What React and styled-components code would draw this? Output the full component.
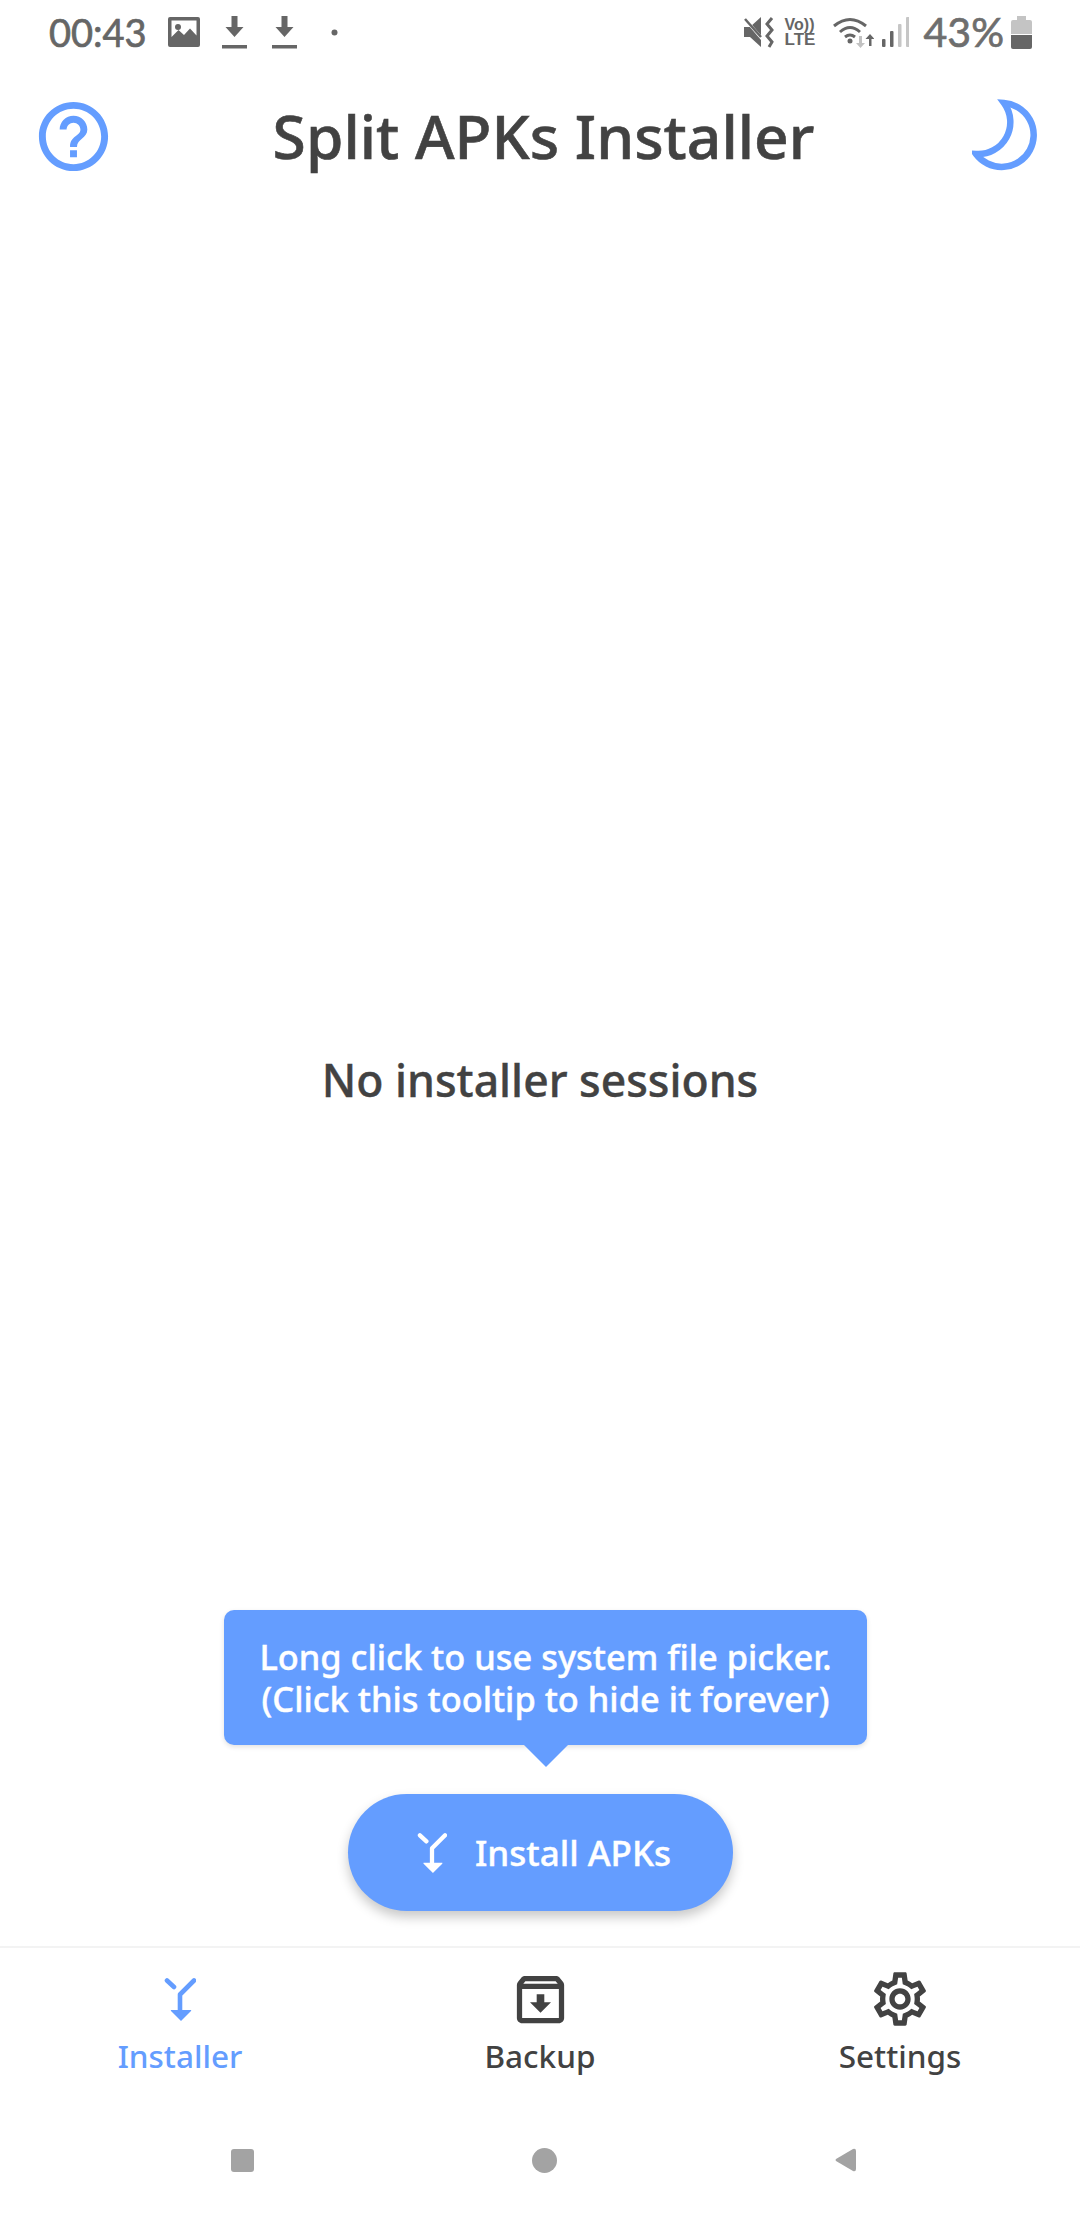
import React from "react";
import styled, { createGlobalStyle } from "styled-components";

const BLUE = "#649dff";
const INK = "#424242";
const STATUS = "#666666";
const FONT = `"Noto Sans", "Open Sans", sans-serif`;

const Global = createGlobalStyle`
  html, body { margin: 0; padding: 0; background: #fff; }
  body { font-family: ${FONT}; }
`;

const Page = styled.div`
  width: 1080px;
  height: 2220px;
  display: flex;
  flex-direction: column;
  background: #fff;
  overflow: hidden;
  position: relative;
`;

const StatusBar = styled.div`
  height: 64px;
  flex: none;
  display: flex;
  align-items: center;
  justify-content: space-between;
  padding: 0 48px 0 49px;
  color: ${STATUS};
`;
const StatusGroup = styled.div`
  display: flex;
  align-items: center;
`;
const StatusText = styled.span`
  font-family: "Lato", sans-serif;
  font-size: 38px;
  line-height: 44px;
  font-weight: 400;
  -webkit-text-stroke: 0.7px currentColor;
  color: ${STATUS};
`;
const StatusIcon = styled.svg`
  flex: none;
  display: block;
  margin-left: ${(p) => p.$gap || 0}px;
  fill: currentColor;
`;
const VolteBadge = styled.div`
  margin-left: 11px;
  width: 31px;
  display: flex;
  flex-direction: column;
  align-items: flex-start;
  font-family: "Liberation Sans", sans-serif;
  font-weight: 700;
  color: ${STATUS};
  line-height: 15px;
`;
const VoLine = styled.span`
  font-size: 16px;
`;
const LteLine = styled.span`
  font-size: 17px;
`;
const Percent = styled(StatusText)`
  margin-left: 15px;
  font-size: 41px;
  color: #6e6e6e;
`;

const Toolbar = styled.header`
  height: 144px;
  flex: none;
  display: flex;
  align-items: center;
  justify-content: space-between;
  padding: 0 40px 6px 32px;
`;
const Title = styled.h1`
  margin: 0;
  font-size: 60.5px;
  line-height: 80px;
  font-weight: 500;
  -webkit-text-stroke: 0.6px currentColor;
  color: ${INK};
`;
const ToolbarIcon = styled.svg`
  flex: none;
  display: block;
`;

const Content = styled.main`
  flex: 1;
  min-height: 0;
  display: flex;
  align-items: center;
  justify-content: center;
  position: relative;
`;
const EmptyText = styled.div`
  font-size: 44.5px;
  line-height: 58px;
  font-weight: 500;
  -webkit-text-stroke: 0.4px currentColor;
  color: ${INK};
`;

const FabStack = styled.div`
  position: absolute;
  left: 0;
  right: 0;
  bottom: 35px;
  display: flex;
  flex-direction: column;
  align-items: center;
`;
const Tooltip = styled.div`
  width: 643px;
  height: 135px;
  margin-left: 11px;
  box-sizing: border-box;
  border-radius: 10px;
  background: ${BLUE};
  color: #fff;
  font-size: 34.4px;
  line-height: 42px;
  font-weight: 500;
  -webkit-text-stroke: 0.4px currentColor;
  text-align: center;
  display: flex;
  flex-direction: column;
  justify-content: center;
  position: relative;
  box-shadow: 0 2px 5px rgba(0, 0, 0, 0.12);
  &::after {
    content: "";
    position: absolute;
    left: 50%;
    top: 100%;
    margin-left: -22px;
    border-left: 22px solid transparent;
    border-right: 22px solid transparent;
    border-top: 22px solid ${BLUE};
  }
`;
const Fab = styled.button`
  margin-top: 49px;
  width: 385px;
  height: 117px;
  border: 0;
  border-radius: 59px;
  background: ${BLUE};
  color: #fff;
  display: flex;
  align-items: center;
  justify-content: center;
  gap: 28px;
  padding: 0 0 0 8px;
  font-family: ${FONT};
  font-size: 35px;
  font-weight: 500;
  -webkit-text-stroke: 0.4px currentColor;
  box-shadow: 0 6px 12px rgba(0, 0, 0, 0.22);
`;

const BottomNav = styled.nav`
  flex: none;
  height: 154px;
  box-sizing: border-box;
  border-top: 2px solid #f3f3f3;
  display: grid;
  grid-template-columns: repeat(3, 1fr);
  width: 1080px;
`;
const Tab = styled.div`
  display: flex;
  flex-direction: column;
  align-items: center;
  padding-top: 23px;
  color: ${(p) => (p.$active ? BLUE : INK)};
`;
const TabIconBox = styled.div`
  height: 56px;
  display: flex;
  align-items: center;
  justify-content: center;
`;
const TabLabel = styled.span`
  margin-top: 8px;
  font-size: 31.5px;
  line-height: 42px;
  font-weight: 500;
`;

const SystemNav = styled.div`
  flex: none;
  height: 120px;
  box-sizing: border-box;
  display: flex;
  align-items: center;
  justify-content: space-between;
  padding: 0 223px 0 231px;
`;
const RecentKey = styled.div`
  width: 23px;
  height: 23px;
  border-radius: 3px;
  background: #a3a3a3;
`;
const HomeKey = styled.div`
  width: 25px;
  height: 25px;
  border-radius: 50%;
  background: #a3a3a3;
`;

const SplitIcon = ({ color, width = 32, height = 43 }) => (
  <svg width={width} height={height} viewBox="0 0 32 43" fill="none">
    <path d="M3 2.5 L10 9" stroke={color} strokeWidth="4.6" strokeLinecap="round" />
    <path d="M30 2.5 L16 16.5 V33" stroke={color} strokeWidth="4.6" strokeLinecap="round" strokeLinejoin="round" />
    <path d="M7 32 H27 Q27.5 32 27 33 L17 43 L7 33 Q6.5 32 7 32 Z" fill={color} />
  </svg>
);

const ArchiveIcon = () => (
  <svg width="63" height="63" viewBox="0 0 24 24" fill="currentColor">
    <path d="M20.54 5.23l-1.39-1.68C18.88 3.21 18.47 3 18 3H6c-.47 0-.88.21-1.16.55L3.46 5.23C3.17 5.57 3 6.02 3 6.5V19c0 1.1.9 2 2 2h14c1.1 0 2-.9 2-2V6.5c0-.48-.17-.93-.46-1.27zM6.24 5h11.52l.81.97H5.44l.8-.97zM5 19V8h14v11H5zm8.45-9h-2.9v3H8l4 4 4-4h-2.55z" />
  </svg>
);

const GearIcon = () => (
  <svg width="64" height="64" viewBox="0 0 24 24" fill="currentColor">
    <path d="M19.43 12.98c.04-.32.07-.64.07-.98 0-.34-.03-.66-.07-.98l2.11-1.65c.19-.15.24-.42.12-.64l-2-3.46c-.09-.16-.26-.25-.44-.25-.06 0-.12.01-.17.03l-2.49 1c-.52-.4-1.08-.73-1.69-.98l-.38-2.65C14.46 2.18 14.25 2 14 2h-4c-.25 0-.46.18-.49.42l-.38 2.65c-.61.25-1.17.59-1.69.98l-2.49-1c-.06-.02-.12-.03-.18-.03-.17 0-.34.09-.43.25l-2 3.46c-.13.22-.07.49.12.64l2.11 1.65c-.04.32-.07.65-.07.98 0 .33.03.66.07.98l-2.11 1.65c-.19.15-.24.42-.12.64l2 3.46c.09.16.26.25.44.25.06 0 .12-.01.17-.03l2.49-1c.52.4 1.08.73 1.69.98l.38 2.65c.03.24.24.42.49.42h4c.25 0 .46-.18.49-.42l.38-2.65c.61-.25 1.17-.59 1.69-.98l2.49 1c.06.02.12.03.18.03.17 0 .34-.09.43-.25l2-3.46c.12-.22.07-.49-.12-.64l-2.11-1.65zm-1.98-1.71c.04.31.05.52.05.73 0 .21-.02.43-.05.73l-.14 1.13.89.7 1.08.84-.7 1.21-1.27-.51-1.04-.42-.9.68c-.43.32-.84.56-1.25.73l-1.06.43-.16 1.13-.2 1.35h-1.4l-.19-1.35-.16-1.13-1.06-.43c-.43-.18-.83-.41-1.23-.71l-.91-.7-1.06.43-1.27.51-.7-1.21 1.08-.84.89-.7-.14-1.13c-.03-.31-.05-.54-.05-.74s.02-.43.05-.73l.14-1.13-.89-.7-1.08-.84.7-1.21 1.27.51 1.04.42.9-.68c.43-.32.84-.56 1.25-.73l1.06-.43.16-1.13.2-1.35h1.39l.19 1.35.16 1.13 1.06.43c.43.18.83.41 1.23.71l.91.7 1.06-.43 1.27-.51.7 1.21-1.07.85-.89.7.14 1.13zM12 8c-2.21 0-4 1.79-4 4s1.79 4 4 4 4-1.79 4-4-1.79-4-4-4zm0 6c-1.1 0-2-.9-2-2s.9-2 2-2 2 .9 2 2-.9 2-2 2z" />
  </svg>
);

const DownloadGlyph = ({ gap }) => (
  <StatusIcon $gap={gap} width="25" height="33" viewBox="0 0 25 33">
    <path d="M9.5 0h6v11h6L12.5 21 3.500 11h6z" />
    <rect x="0" y="29" width="25" height="3.500" />
  </StatusIcon>
);

export default function App() {
  return (
    <Page>
      <Global />
      <StatusBar>
        <StatusGroup>
          <StatusText>00:43</StatusText>
          <StatusIcon $gap={21} width="32" height="30" viewBox="0 0 32 30">
            <path fillRule="evenodd" d="M2 0h28a2 2 0 0 1 2 2v26a2 2 0 0 1-2 2H2a2 2 0 0 1-2-2V2a2 2 0 0 1 2-2zM3.500 3.500V20l7-7 5.500 5 6-6.500 6.500 7V3.500z" />
            <circle cx="10" cy="10" r="3" />
          </StatusIcon>
          <DownloadGlyph gap={22} />
          <DownloadGlyph gap={25} />
          <StatusIcon $gap={34} width="7" height="7" viewBox="0 0 7 7">
            <circle cx="3.500" cy="3.500" r="3" />
          </StatusIcon>
        </StatusGroup>
        <StatusGroup>
          <StatusIcon width="31" height="33" viewBox="0 0 31 33">
            <path d="M1 11h6L18 1v30L7 21H1z" />
            <path d="M2 3 L20 24" stroke="#fff" strokeWidth="3" />
            <path d="M2 3 L18 21" stroke="currentColor" strokeWidth="2.500" />
            <path d="M29 2 L24 8 L29 14 L24 20 L29 26 L26 31" fill="none" stroke="currentColor" strokeWidth="3" />
          </StatusIcon>
          <VolteBadge>
            <VoLine>Vo))</VoLine>
            <LteLine>LTE</LteLine>
          </VolteBadge>
          <StatusIcon $gap={16} width="42" height="32" viewBox="0 0 42 32">
            <path d="M2 10 Q18 -3 34 10 M8 16 Q18 7 28 16 M13 21 Q18 17 23 21" fill="none" stroke="currentColor" strokeWidth="3" />
            <circle cx="18" cy="25" r="2.500" />
            <path d="M27 20h3v7h3l-4.500 5-4.500-5h3z" fill="#c2c2c2" />
            <path d="M37 30h2.500v-7h3L38 18l-4.500 5h3.500z" />
          </StatusIcon>
          <StatusIcon $gap={8} width="27" height="30" viewBox="0 0 27 30">
            <rect x="0" y="22" width="3.500" height="8" rx="1" />
            <rect x="8" y="14" width="3.500" height="16" rx="1" />
            <rect x="16" y="7" width="3.500" height="23" rx="1" fill="#c6c6c6" />
            <rect x="24" y="0" width="3.500" height="30" rx="1" fill="#c6c6c6" />
          </StatusIcon>
          <Percent>43%</Percent>
          <StatusIcon $gap={7} width="21" height="33" viewBox="0 0 21 33">
            <path d="M6 0h9v4h4a2 2 0 0 1 2 2v12H0V6a2 2 0 0 1 2-2h4z" fill="#c4c4c4" />
            <path d="M0 19h21v12a2 2 0 0 1-2 2H2a2 2 0 0 1-2-2z" />
          </StatusIcon>
        </StatusGroup>
      </StatusBar>

      <Toolbar>
        <ToolbarIcon width="83" height="83" viewBox="0 0 24 24" fill={BLUE}>
          <path d="M11 18h2v-2h-2v2zm1-16C6.480 2 2 6.480 2 12s4.480 10 10 10 10-4.480 10-10S17.520 2 12 2zm0 18c-4.410 0-8-3.590-8-8s3.590-8 8-8 8 3.590 8 8-3.590 8-8 8zm0-14c-2.210 0-4 1.790-4 4h2c0-1.100.9-2 2-2s2 .9 2 2c0 2-3 1.750-3 5h2c0-2.250 3-2.500 3-5 0-2.210-1.790-4-4-4z" />
        </ToolbarIcon>
        <Title>Split APKs Installer</Title>
        <ToolbarIcon width="68" height="74" viewBox="0 0 68 74" fill="none">
          <path d="M32 4 A32 32 0 1 1 4 55 A32 32 0 0 0 32 4 Z" stroke={BLUE} strokeWidth="6.5" strokeLinejoin="miter" />
        </ToolbarIcon>
      </Toolbar>

      <Content>
        <EmptyText>No installer sessions</EmptyText>
        <FabStack>
          <Tooltip>
            <span>Long click to use system file picker.</span>
            <span>(Click this tooltip to hide it forever)</span>
          </Tooltip>
          <Fab>
            <SplitIcon color="#fff" width={30} height={40} />
            Install APKs
          </Fab>
        </FabStack>
      </Content>

      <BottomNav>
        <Tab $active>
          <TabIconBox>
            <SplitIcon color={BLUE} />
          </TabIconBox>
          <TabLabel>Installer</TabLabel>
        </Tab>
        <Tab>
          <TabIconBox>
            <ArchiveIcon />
          </TabIconBox>
          <TabLabel>Backup</TabLabel>
        </Tab>
        <Tab>
          <TabIconBox>
            <GearIcon />
          </TabIconBox>
          <TabLabel>Settings</TabLabel>
        </Tab>
      </BottomNav>

      <SystemNav>
        <RecentKey />
        <HomeKey />
        <svg width="22" height="24" viewBox="0 0 22 24" fill="#a3a3a3">
          <path d="M1 11 L18 1 Q21 0 21 3 V21 Q21 24 18 23 L1 13 Q0 12 1 11 Z" />
        </svg>
      </SystemNav>
    </Page>
  );
}
